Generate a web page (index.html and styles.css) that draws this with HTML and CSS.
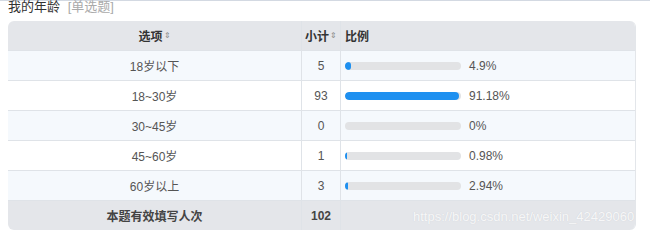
FILE: index.html
```html
<!DOCTYPE html>
<html lang="zh">
<head>
<meta charset="utf-8">
<link rel="stylesheet" href="styles.css">
</head>
<body>
<div class="page">
  <div class="title">我的年龄 <span class="type">[单选题]</span></div>
  <div class="table">
    <div class="row head">
      <div class="c1">选项<span class="sort">⇕</span></div>
      <div class="c2">小计<span class="sort">⇕</span></div>
      <div class="c3 left">比例</div>
    </div>
    <div class="row odd">
      <div class="c1">18岁以下</div>
      <div class="c2">5</div>
      <div class="c3 left"><div class="bar"><div class="fill" style="width:4.9%"></div></div><span class="pct">4.9%</span></div>
    </div>
    <div class="row">
      <div class="c1">18~30岁</div>
      <div class="c2">93</div>
      <div class="c3 left"><div class="bar"><div class="fill" style="width:98%"></div></div><span class="pct">91.18%</span></div>
    </div>
    <div class="row odd">
      <div class="c1">30~45岁</div>
      <div class="c2">0</div>
      <div class="c3 left"><div class="bar"></div><span class="pct">0%</span></div>
    </div>
    <div class="row">
      <div class="c1">45~60岁</div>
      <div class="c2">1</div>
      <div class="c3 left"><div class="bar"><div class="fill" style="width:1.5%"></div></div><span class="pct">0.98%</span></div>
    </div>
    <div class="row odd">
      <div class="c1">60岁以上</div>
      <div class="c2">3</div>
      <div class="c3 left"><div class="bar"><div class="fill" style="width:3%"></div></div><span class="pct">2.94%</span></div>
    </div>
    <div class="row foot">
      <div class="c1">本题有效填写人次</div>
      <div class="c2">102</div>
      <div class="c3"></div>
    </div>
  </div>
  <div class="watermark">https://blog.csdn.net/weixin_42429060</div>
</div>
</body>
</html>
```
FILE: styles.css
```css
html, body {
  margin: 0;
  padding: 0;
  background: #ffffff;
}
body {
  font-family: "Liberation Sans", Arial, "Noto Sans CJK SC", sans-serif;
  color: #555;
  font-size: 12px;
}
.page {
  position: relative;
  width: 650px;
  height: 241px;
  border-top: 1px solid #d3d9e2;
  box-sizing: border-box;
  padding: 0 15px 0 8px;
}
.title {
  height: 20px;
  line-height: 12px;
  font-size: 13px;
  color: #333;
}
.type {
  color: #aaa;
  margin-left: 4px;
}
.table {
  width: 627px;
  border-radius: 6px;
  overflow: hidden;
  border-right: 1px solid #e3e6ea;
}
.row {
  display: grid;
  grid-template-columns: 293px 40px 1fr;
  height: 30px;
  border-bottom: 1px solid #dfe3e8;
  box-sizing: border-box;
  background: #fff;
}
.row.odd {
  background: #f5f9fd;
}
.row.head {
  background: #e4e6ea;
  font-weight: bold;
  color: #333;
}
.row.foot {
  height: 29px;
  background: #e4e6ea;
  font-weight: bold;
  color: #444;
  border-bottom: none;
}
.row > div {
  display: flex;
  align-items: center;
  justify-content: center;
}
.c2 {
  border-left: 1px solid #dfe3e8;
  border-right: 1px solid #dfe3e8;
}
.row > .left {
  justify-content: flex-start;
  padding-left: 4px;
}
.sort {
  font-size: 8px;
  color: #888;
  margin-left: 1px;
  font-weight: normal;
}
.bar {
  width: 116px;
  height: 8px;
  border-radius: 4px;
  background: #e2e3e5;
  overflow: hidden;
}
.fill {
  height: 100%;
  min-width: 2px;
  background: #1e90f0;
  border-radius: 4px;
}
.pct {
  margin-left: 8px;
  color: #555;
}
.watermark {
  position: absolute;
  left: 413px;
  top: 208px;
  font-size: 13px;
  color: rgba(255, 255, 255, 0.85);
  text-shadow: 0 0 1px #c9ccd2;
}
```
